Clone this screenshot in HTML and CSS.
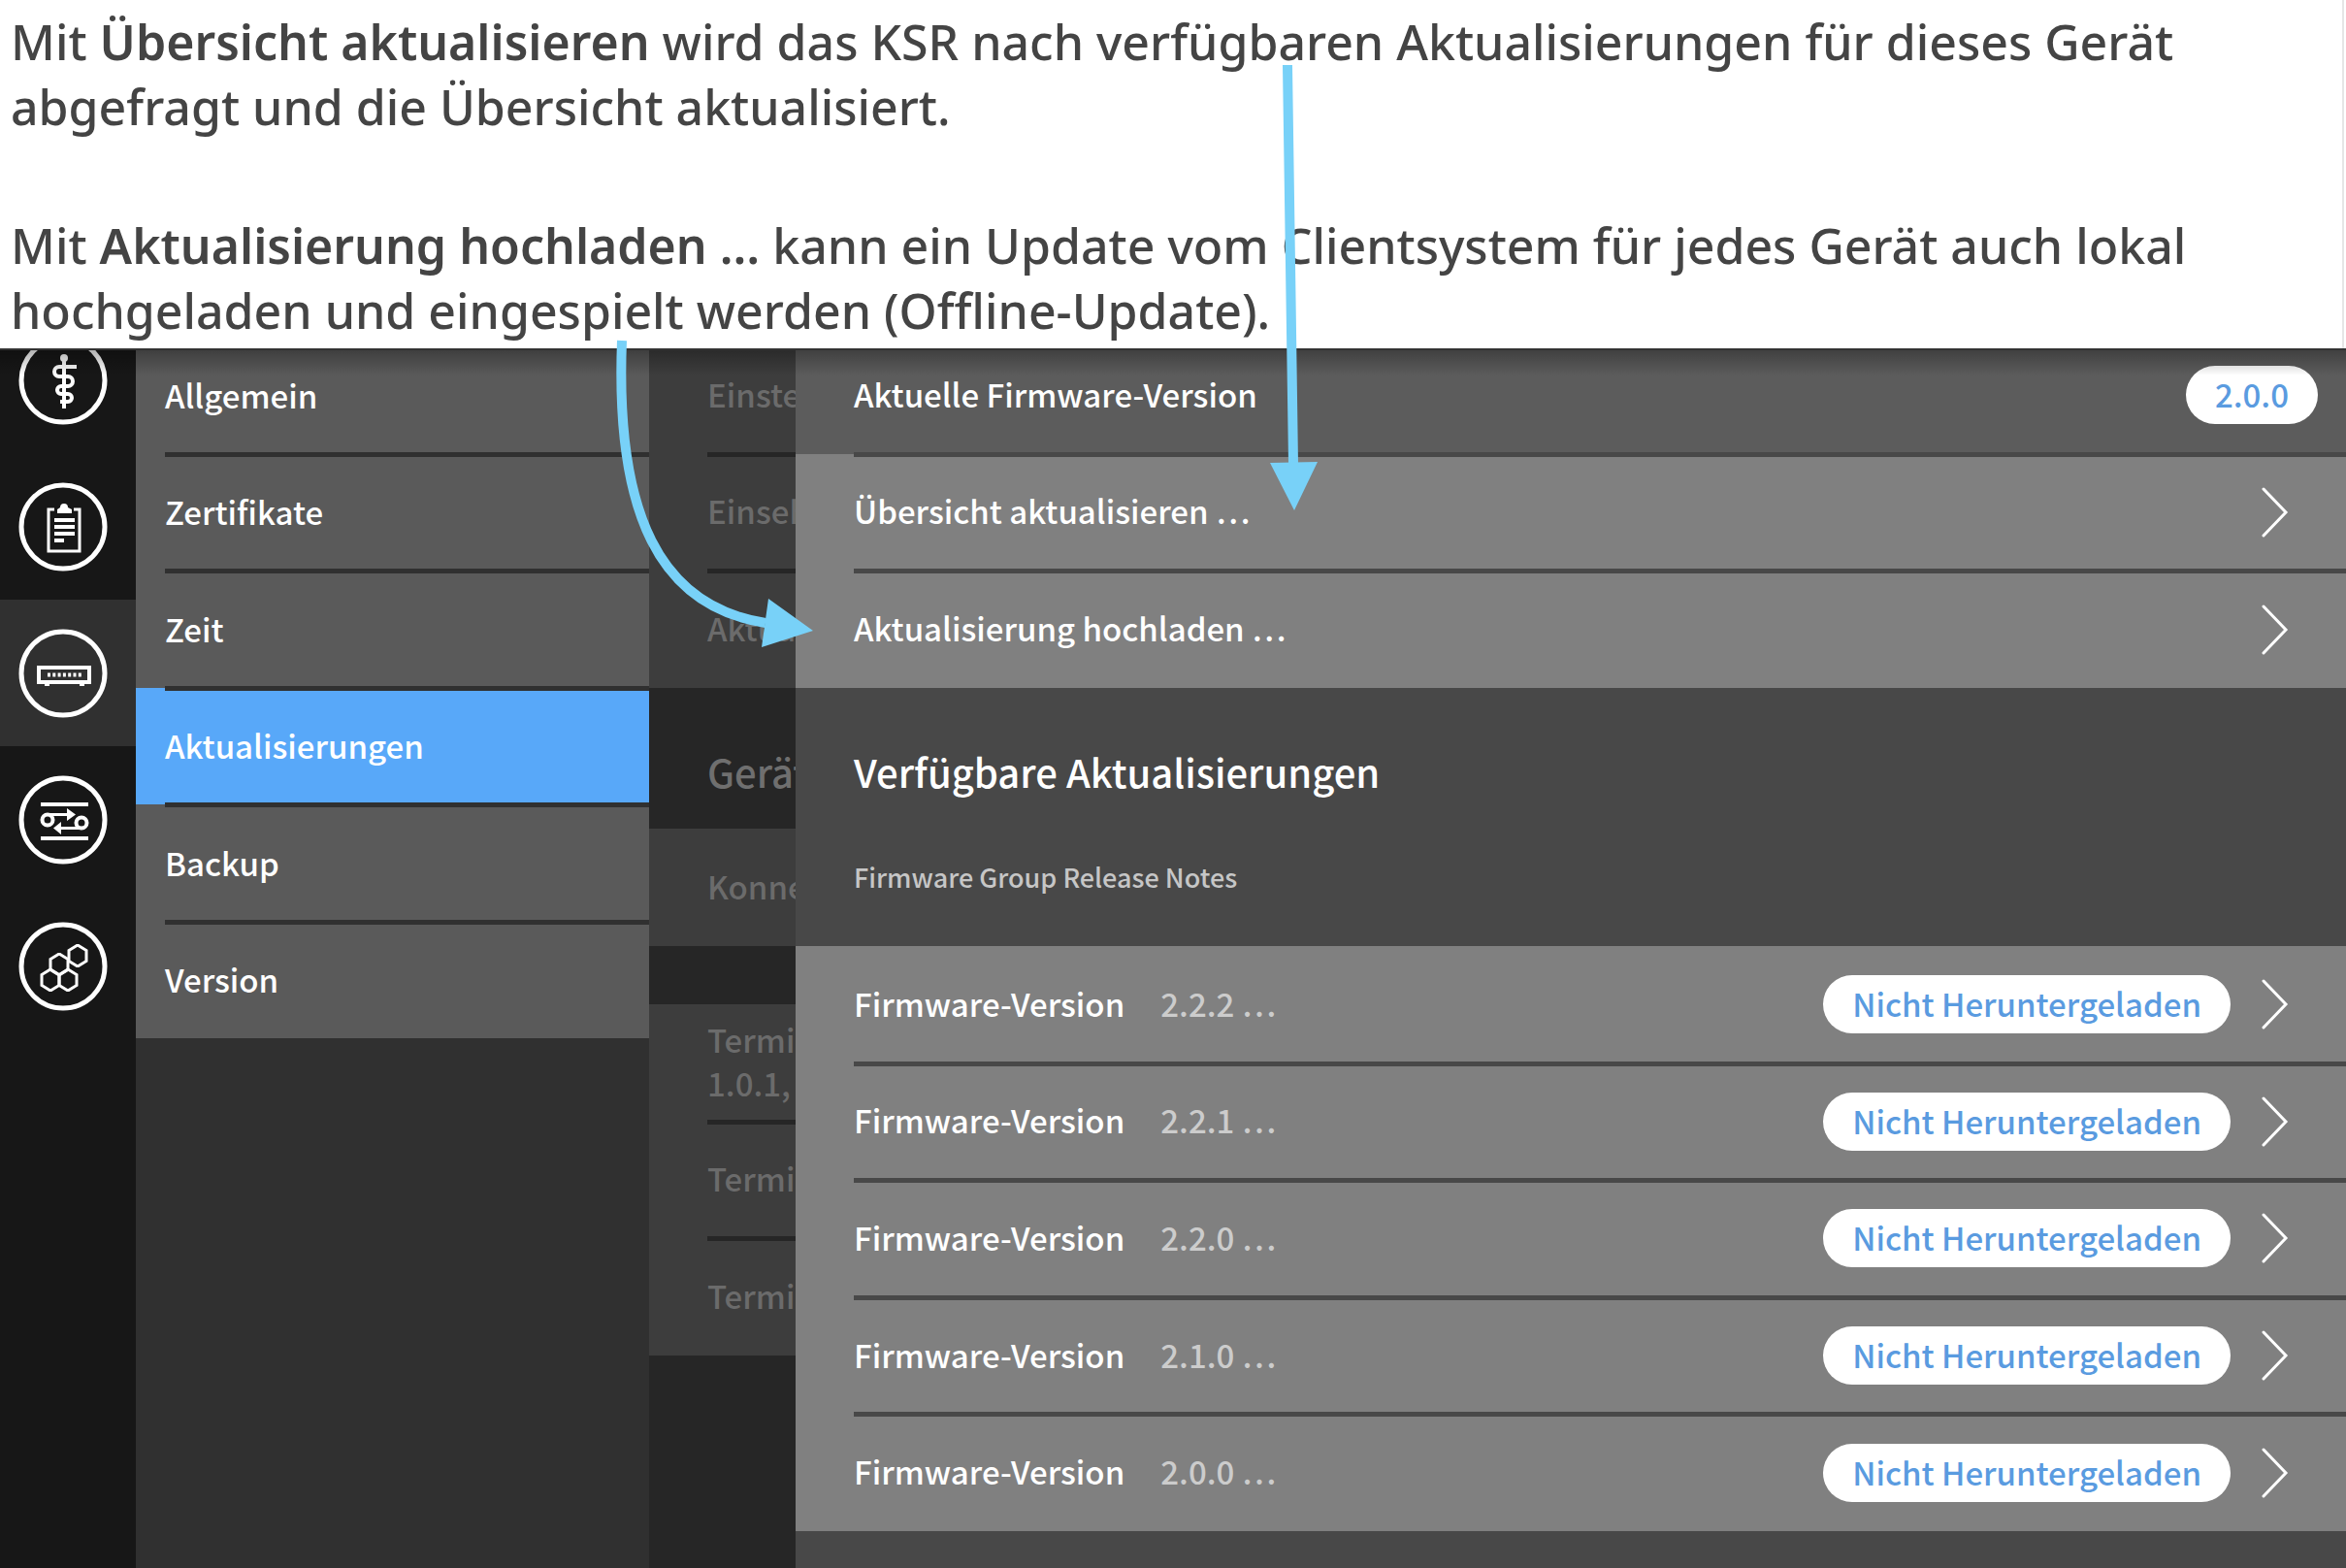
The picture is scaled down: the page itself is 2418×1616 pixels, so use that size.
FILE: index.html
```
<!DOCTYPE html>
<html lang="de">
<head>
<meta charset="utf-8">
<title>Aktualisierungen</title>
<link rel="stylesheet" href="styles.css">
</head>
<body>
<svg class="defs" aria-hidden="true">
  <symbol id="chevron" viewBox="0 0 28 52"><path d="M2 2 25 26 2 50" fill="none" stroke="currentColor" stroke-width="3" stroke-linecap="round"/></symbol>
  <symbol id="hex" viewBox="-12 -12 24 24"><path d="M0-11 9-5.500V5.500L0 11-9 5.500V-5.500Z" fill="none" stroke="currentColor" stroke-width="3"/></symbol>
</svg>

<section class="notes">
  <p>Mit <strong>Übersicht aktualisieren</strong> wird das KSR nach verfügbaren Aktualisierungen für dieses Gerät<br>abgefragt und die Übersicht aktualisiert.</p>
  <p>Mit <strong>Aktualisierung hochladen …</strong> kann ein Update vom Clientsystem für jedes Gerät auch lokal<br>hochgeladen und eingespielt werden (Offline-Update).</p>
</section>

<div class="app">
  <nav class="rail" aria-label="Bereiche">
    <button class="rail-item" aria-label="Praxis">
      <svg viewBox="-46 -46 92 92"><circle r="43"/><path class="thick" d="M1-20V29M14-14H-4a5 5 0 0 0 0 10H5a5 5 0 0 1 0 10H-2a4 4 0 0 0 0 8H5a4 4 0 0 1 0 8H-3"/><circle class="fill" cx="1" cy="-23" r="4"/></svg>
    </button>
    <button class="rail-item" aria-label="Protokoll">
      <svg viewBox="-46 -46 92 92"><circle r="43"/><path class="thin" d="M-9-18H-15V25H17V-18H11"/><path class="fill" d="M-6-14V-18L-3-20A4 4 0 0 1 5-20L9-18V-14Z"/><path class="thick" d="M-9-7H12M-9 0H12M-9 7H12M-9 14H1"/></svg>
    </button>
    <button class="rail-item rail-active" aria-label="System">
      <svg viewBox="-46 -46 92 92"><circle r="43"/><rect class="thick" x="-25" y="-6" width="52" height="15"/><path class="thick" stroke-dasharray="3 2.300" d="M-16 1.500H19"/><path class="thick" d="M-19 11H-14M17 11H22"/></svg>
    </button>
    <button class="rail-item" aria-label="Netzwerk">
      <svg viewBox="-46 -46 92 92"><circle r="43"/><path class="thick" d="M-23-16H26M-23 19H26"/><circle class="thick" cx="-16" cy="0" r="5.500"/><circle class="thick" cx="19" cy="3" r="5.500"/><path class="thin" d="M-16-5.500H6M19 8.500H-4"/><path class="fill" d="M4-12 13-5.500 4 1ZM-2 2-10 8.500-2 15Z"/></svg>
    </button>
    <button class="rail-item" aria-label="Module">
      <svg viewBox="-46 -46 92 92"><circle r="43"/><use href="#hex" x="3" y="-23" width="24" height="24"/><use href="#hex" x="-16" y="-14" width="24" height="24"/><use href="#hex" x="-25" y="2" width="24" height="24"/><use href="#hex" x="-7" y="2" width="24" height="24"/></svg>
    </button>
  </nav>

  <nav class="menu" aria-label="System">
    <div class="list list-6 under-edge">
      <a class="row" href="#">Allgemein</a>
      <a class="row" href="#">Zertifikate</a>
      <a class="row" href="#">Zeit</a>
      <a class="row row-selected" href="#" aria-current="page">Aktualisierungen</a>
      <a class="row" href="#">Backup</a>
      <a class="row" href="#">Version</a>
    </div>
  </nav>

  <section class="back">
    <div class="list list-3 under-edge">
      <div class="row">Einste</div>
      <div class="row">Einseh</div>
      <div class="row">Aktua</div>
    </div>
    <h2 class="back-title">Gerät</h2>
    <div class="list list-1"><div class="row">Konne</div></div>
    <div class="list list-3 back-group">
      <div class="row">Termi<br>1.0.1,</div>
      <div class="row">Termi</div>
      <div class="row">Termi</div>
    </div>
  </section>

  <main class="panel">
    <div class="list list-3 under-edge">
      <div class="row row-info"><span class="name">Aktuelle Firmware-Version</span><span class="pill">2.0.0</span></div>
      <button class="row"><span class="name">Übersicht aktualisieren …</span><svg class="chevron"><use href="#chevron"/></svg></button>
      <button class="row"><span class="name">Aktualisierung hochladen …</span><svg class="chevron"><use href="#chevron"/></svg></button>
    </div>
    <header class="panel-head">
      <h1>Verfügbare Aktualisierungen</h1>
      <p>Firmware Group Release Notes</p>
    </header>
    <div class="list list-5">
      <button class="row"><span class="name">Firmware-Version<span class="value">2.2.2 …</span></span><span class="pill">Nicht Heruntergeladen</span><svg class="chevron"><use href="#chevron"/></svg></button>
      <button class="row"><span class="name">Firmware-Version<span class="value">2.2.1 …</span></span><span class="pill">Nicht Heruntergeladen</span><svg class="chevron"><use href="#chevron"/></svg></button>
      <button class="row"><span class="name">Firmware-Version<span class="value">2.2.0 …</span></span><span class="pill">Nicht Heruntergeladen</span><svg class="chevron"><use href="#chevron"/></svg></button>
      <button class="row"><span class="name">Firmware-Version<span class="value">2.1.0 …</span></span><span class="pill">Nicht Heruntergeladen</span><svg class="chevron"><use href="#chevron"/></svg></button>
      <button class="row"><span class="name">Firmware-Version<span class="value">2.0.0 …</span></span><span class="pill">Nicht Heruntergeladen</span><svg class="chevron"><use href="#chevron"/></svg></button>
    </div>
  </main>
</div>

<svg class="arrows" width="1400" height="700" viewBox="0 0 1400 700" aria-hidden="true">
  <path class="arrow-line" d="M1327 67 1333 478M641 351C634 530 680 625 789 642"/>
  <path class="arrow-head" d="M1309 477 1358 476 1334 526ZM792 617 785 667 838 650Z"/>
</svg>
</body>
</html>
```
FILE: styles.css
```
* { box-sizing: border-box; }

body {
  position: relative;
  display: flex;
  flex-direction: column;
  min-height: 100vh;
  margin: 0;
  background: #fff;
  font: 500 33px/45px "Noto Sans CJK SC", sans-serif;
}

h1, h2, p { margin: 0; }
.defs { position: absolute; width: 0; height: 0; }

/* Explanatory text */
.notes {
  margin-right: 2px;
  padding: 10px 0 5px 11px;
  border-right: 2px solid #e6e6e6;
  color: #444;
  font: 500 50px/67px "Noto Sans", sans-serif;
  white-space: nowrap;
}
.notes p + p { margin-top: 76px; }
.notes strong { font-weight: 600; }

/* Application frame */
.app {
  position: relative;
  display: grid;
  grid-template-columns: 140px 529px 151px 1fr;
  flex: 1;
  overflow: hidden;
  border-top: 2px solid #333;
}
.app::after {
  content: "";
  position: absolute;
  inset: 0 0 auto;
  height: 26px;
  background: linear-gradient(rgba(0, 0, 0, .3), rgba(0, 0, 0, 0));
  pointer-events: none;
}

button { border: 0; padding: 0; background: none; color: inherit; font: inherit; text-align: left; }

/* Icon rail */
.rail { display: flex; flex-direction: column; background: #171717; }
.rail-item {
  display: flex;
  align-items: center;
  flex: none;
  height: 151px;
  padding-left: 19px;
}
.rail-item:first-child { margin-top: -45px; }
.rail-active { background: #303030; }
.rail svg { width: 92px; height: 92px; fill: none; stroke: #fff; stroke-width: 5; color: #fff; }
.rail .thin { stroke-width: 3; }
.rail .thick { stroke-width: 4; }
.rail .fill { fill: #fff; stroke: none; }

/* Row lists */
.list { display: grid; grid-auto-rows: 1fr; }
.list-1 { min-height: 121px; }
.list-3 { min-height: 362px; }
.list-5 { min-height: 603px; }
.list-6 { min-height: 723px; }
.under-edge { margin-top: -14px; }
.row {
  position: relative;
  display: flex;
  align-items: center;
  color: #fff;
  text-decoration: none;
  white-space: nowrap;
}
.row:not(:last-child)::after {
  content: "";
  position: absolute;
  z-index: 1;
  right: 0;
  bottom: -3px;
  height: 5px;
  background: var(--rule);
}

.menu { --rule: #303030; background: #303030; }
.menu .row { padding-left: 30px; background: #5a5a5a; }
.menu .row::after { left: 30px; }
.menu .row-selected { background: #58a8f9; }

.back { --rule: #262626; overflow: hidden; background: #262626; }
.back .row { padding: 0 0 2px 60px; background: #3d3d3d; color: #6b6b6b; }
.back .row::after { left: 60px; }
.back-title {
  padding: 56px 0 29px 60px;
  color: #6f6f6f;
  font-size: 40px;
  font-weight: 500;
  line-height: 60px;
}
.back-group { margin-top: 60px; }

.panel { --rule: #484848; background: #484848; }
.panel .row { padding: 0 59px 0 60px; background: #808080; }
.panel .row::after { left: 60px; }
.panel .row-info { padding-right: 29px; background: #5c5c5c; }
.name { flex: 1; padding-bottom: 2px; }
.value { margin-left: 37px; color: #ccc; font-size: 33px; }
.pill {
  padding: 0 30px 2px;
  border-radius: 30px;
  background: #fff;
  color: #5a9be0;
  font-size: 33px;
  line-height: 58px;
}
.chevron { width: 28px; height: 52px; margin-left: 32px; }

.panel-head { padding: 56px 60px 49px; color: #fff; }
.panel-head h1 { font-size: 40px; font-weight: 500; line-height: 60px; }
.panel-head p { margin-top: 56px; color: #c6c6c6; font-size: 27px; }

/* Callout arrows */
.arrows { position: absolute; top: 0; left: 0; z-index: 2; pointer-events: none; }
.arrow-line { fill: none; stroke: #78d1f8; stroke-width: 10; }
.arrow-head { fill: #78d1f8; }
```
